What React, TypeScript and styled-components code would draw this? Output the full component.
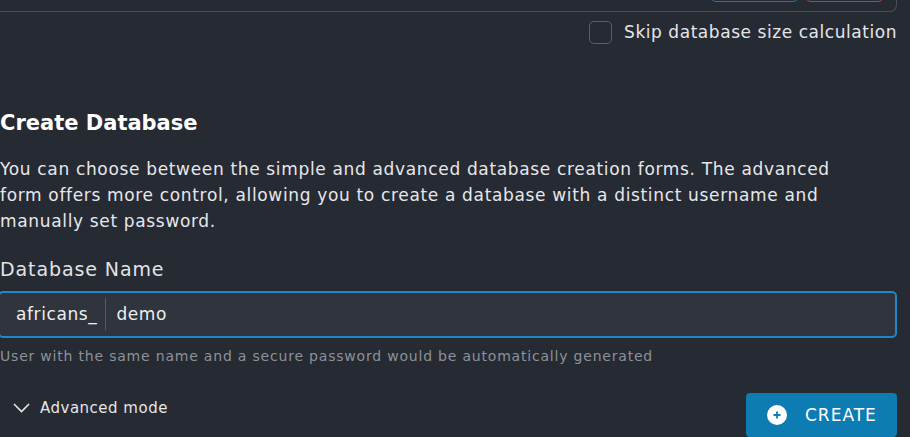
import React, { useState } from "react";
import styled, { createGlobalStyle } from "styled-components";

const GlobalStyle = createGlobalStyle`
  html, body {
    margin: 0;
    padding: 0;
    background: #262a33;
    overflow: hidden;
  }
  body {
    font-family: "DejaVu Sans", "Open Sans", sans-serif;
    color: #e6e7ea;
  }
`;

const Page = styled.div`
  width: 910px;
  height: 437px;
  box-sizing: border-box;
  padding: 0 13px 0 0;
  display: flex;
  flex-direction: column;
`;

const TopCard = styled.div`
  margin-top: -40px;
  height: 53px;
  box-sizing: border-box;
  border: 1px solid #4a4f5b;
  border-top: none;
  border-left: none;
  border-radius: 0 0 7px 0;
  display: flex;
  align-items: flex-end;
  justify-content: space-between;
  padding: 0 12px 9px 20px;
`;

const CardIcon = styled.div`
  width: 12px;
  height: 12px;
  border-radius: 50%;
  background: #e8e8e8;
  margin-bottom: 10px;
`;

const CardActions = styled.div`
  display: flex;
  gap: 6px;
`;

const OutlineButton = styled.button<{ $tone: string }>`
  width: ${(p) => (p.$tone === "blue" ? 89 : 79)}px;
  height: 32px;
  background: transparent;
  border: 1px solid ${(p) => (p.$tone === "blue" ? "#1a79ad" : "#b9461c")};
  border-radius: 6px;
`;

const CheckRow = styled.label`
  margin-top: 8px;
  display: flex;
  align-items: center;
  justify-content: flex-end;
  gap: 12px;
  font-size: 17px;
  letter-spacing: 0.55px;
  color: #e4e5e8;
  height: 24px;
`;

const CheckBox = styled.span`
  width: 23px;
  height: 23px;
  box-sizing: border-box;
  border: 1px solid #5a5f6a;
  border-radius: 5px;
`;

const Heading = styled.h2`
  margin: 65px 0 0 0;
  font-size: 21px;
  line-height: 28px;
  font-weight: 700;
  color: #ffffff;
`;

const Description = styled.p`
  margin: 19px 0 0 0;
  font-size: 17px;
  letter-spacing: 0.66px;
  line-height: 26px;
  color: #e6e7ea;
  max-width: 843px;
`;

const FieldLabel = styled.div`
  margin-top: 22px;
  font-size: 19px;
  letter-spacing: 0.9px;
  line-height: 26px;
  color: #e2e3e6;
`;

const InputBox = styled.div`
  margin: 9px 0 0 -2px;
  height: 48px;
  box-sizing: border-box;
  border: 2px solid #1e88c6;
  border-radius: 5px;
  background: #30343d;
  display: flex;
  align-items: center;
  padding: 0 16px;
`;

const Prefix = styled.span`
  font-size: 17px;
  letter-spacing: 0.6px;
  color: #eceef0;
  padding-right: 8px;
  border-right: 1px solid #555a64;
  line-height: 32px;
`;

const NameInput = styled.input`
  flex: 1;
  background: transparent;
  border: none;
  outline: none;
  font-family: inherit;
  font-size: 17px;
  letter-spacing: 0.6px;
  color: #eceef0;
  padding: 0 0 0 10px;
  caret-color: #ffffff;
`;

const Helper = styled.div`
  margin-top: 8px;
  font-size: 14px;
  letter-spacing: 0.8px;
  line-height: 20px;
  color: #8d9199;
`;

const Footer = styled.div`
  margin-top: 27px;
  display: flex;
  justify-content: space-between;
  align-items: flex-start;
`;

const AdvancedToggle = styled.button`
  height: 30px;
  display: flex;
  align-items: center;
  gap: 10px;
  background: transparent;
  border: none;
  padding: 0 0 0 13px;
  font-family: inherit;
  font-size: 15px;
  letter-spacing: 0.5px;
  color: #e4e5e8;
  cursor: pointer;
`;

const CreateButton = styled.button`
  width: 151px;
  height: 44px;
  background: #0c7cb3;
  border: none;
  border-radius: 4px;
  display: flex;
  align-items: center;
  gap: 18px;
  padding: 0 0 0 21px;
  font-family: inherit;
  font-size: 17px;
  letter-spacing: 1px;
  color: #ffffff;
  cursor: pointer;
`;

export default function App() {
  const [name, setName] = useState("demo");

  return (
    <>
      <GlobalStyle />
      <Page>
        <TopCard>
          <CardIcon />
          <CardActions>
            <OutlineButton $tone="blue" />
            <OutlineButton $tone="red" />
          </CardActions>
        </TopCard>

        <CheckRow>
          <CheckBox />
          Skip database size calculation
        </CheckRow>

        <Heading>Create Database</Heading>
        <Description>
          You can choose between the simple and advanced database creation forms. The advanced
          form offers more control, allowing you to create a database with a distinct username and
          manually set password.
        </Description>

        <FieldLabel>Database Name</FieldLabel>
        <InputBox>
          <Prefix>africans_</Prefix>
          <NameInput value={name} onChange={(e) => setName(e.target.value)} autoFocus />
        </InputBox>
        <Helper>User with the same name and a secure password would be automatically generated</Helper>

        <Footer>
          <AdvancedToggle>
            <svg width="17" height="10" viewBox="0 0 17 10" fill="none">
              <path d="M1 1l7.5 7.5L16 1" stroke="#e4e5e8" strokeWidth="1.6" />
            </svg>
            Advanced mode
          </AdvancedToggle>
          <CreateButton>
            <svg width="20" height="20" viewBox="0 0 20 20">
              <circle cx="10" cy="10" r="10" fill="#ffffff" />
              <path d="M10 6.5v7M6.5 10h7" stroke="#0c7cb3" strokeWidth="1.8" />
            </svg>
            CREATE
          </CreateButton>
        </Footer>
      </Page>
    </>
  );
}
